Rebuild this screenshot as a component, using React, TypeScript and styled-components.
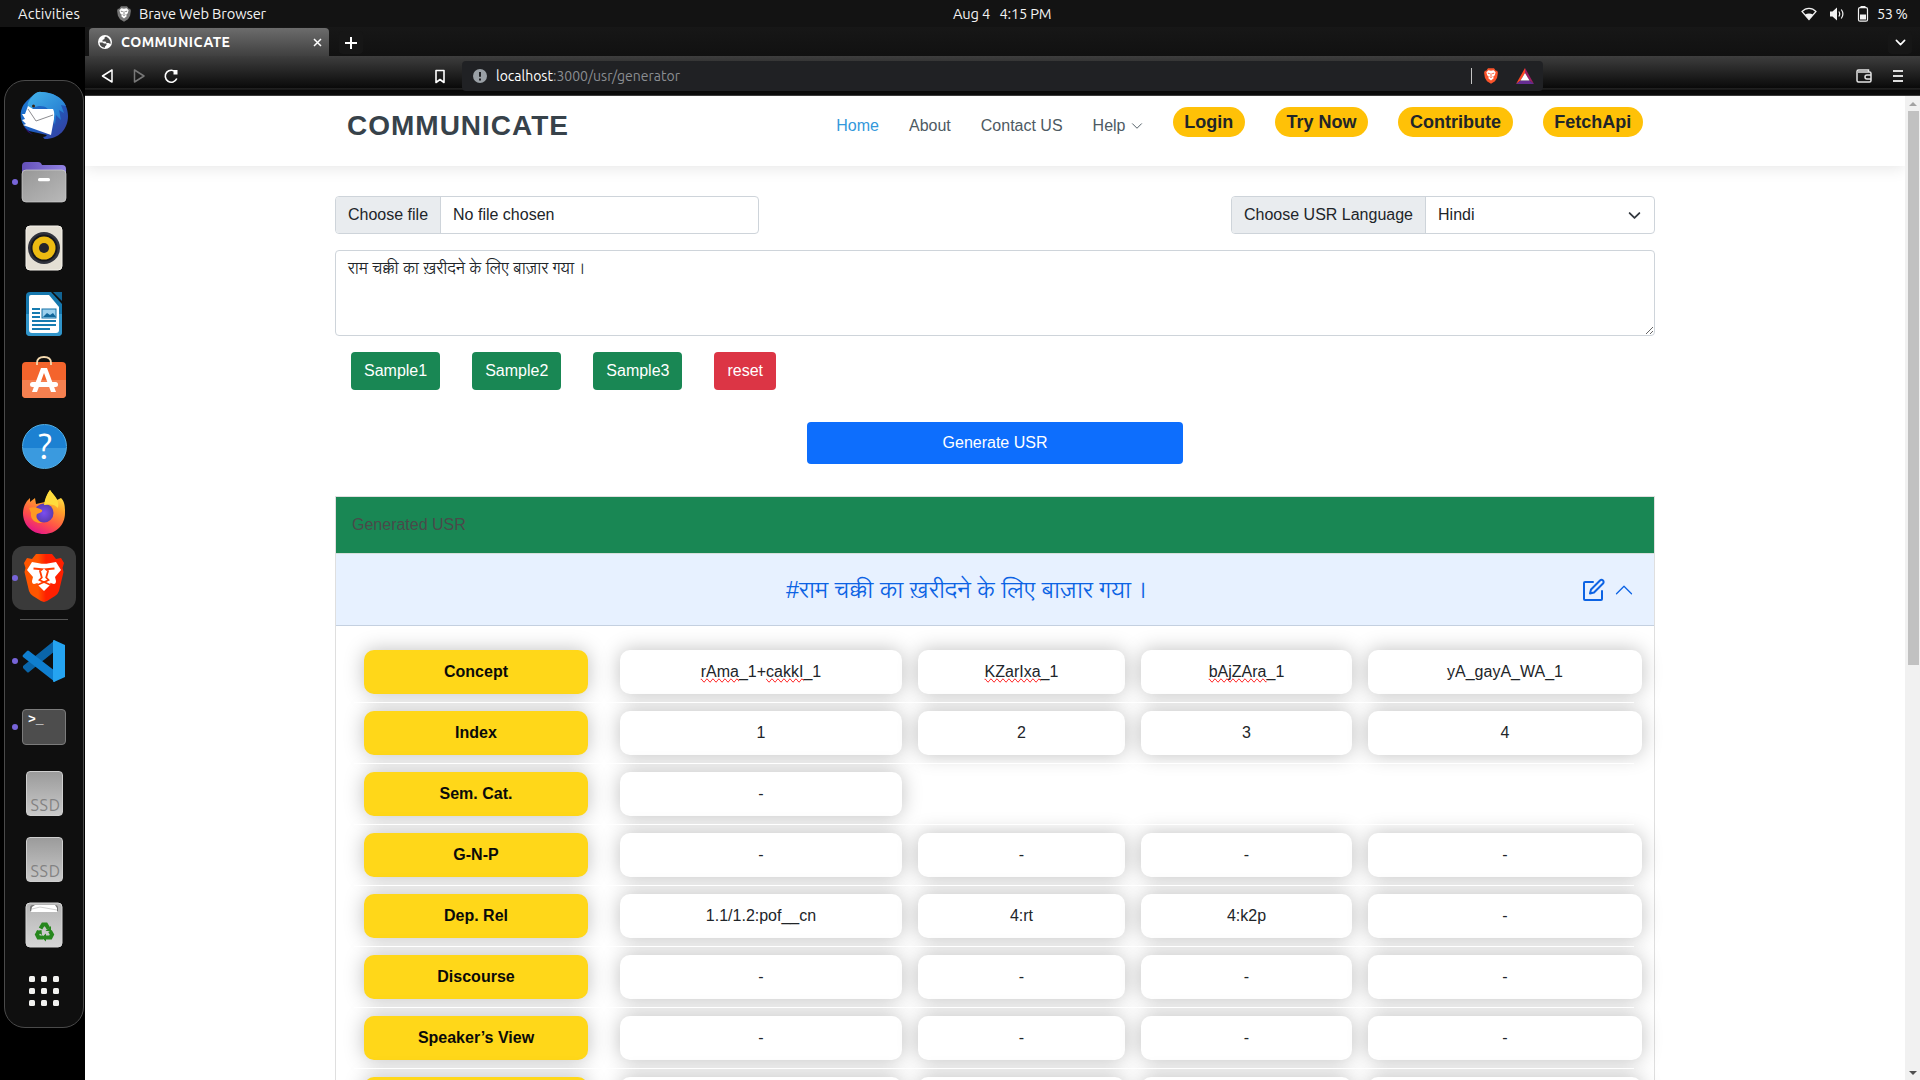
import React from "react";
import styled, { createGlobalStyle } from "styled-components";

const UI = `Ubuntu, "Noto Sans", "Open Sans", sans-serif`;
const BODY = `"Liberation Sans", "Lohit Devanagari", "Noto Sans Devanagari", "Noto Sans", sans-serif`;

const Global = createGlobalStyle`
  *, *::before, *::after { box-sizing: border-box; }
  html, body { margin: 0; padding: 0; background: #000; overflow: hidden; }
  body { font-family: ${BODY}; font-size: 16px; line-height: 24px; color: #212529; }
  button, textarea { font: inherit; }
`;

const Screen = styled.div`
  width: 1920px;
  height: 1080px;
  display: flex;
  flex-direction: column;
  background: #000;
  overflow: hidden;
`;

/* ---------- system bar ---------- */
const SystemBar = styled.header`
  flex: none;
  height: 27px;
  display: grid;
  grid-template-columns: 935px auto 1fr;
  align-items: center;
  padding: 0 13px 0 18px;
  background: #131313;
  color: #f2f2f2;
  font-family: ${UI};
  font-size: 14.67px;
  line-height: 28px;
`;
const BarGroup = styled.div<{ $end?: boolean }>`
  display: flex;
  align-items: center;
  height: 27px;
  justify-content: ${(p) => (p.$end ? "flex-end" : "flex-start")};
`;
const BarText = styled.span<{ $w: number; $ls?: number; $ml?: number }>`
  width: ${(p) => p.$w}px;
  margin-left: ${(p) => p.$ml ?? 0}px;
  letter-spacing: ${(p) => p.$ls ?? 0}px;
  white-space: pre;
`;
const Tray = styled.div`
  display: flex;
  align-items: center;
  gap: 12px;
  margin-right: 8px;
`;

/* ---------- desktop ---------- */
const Desktop = styled.div`
  flex: 1;
  min-height: 0;
  display: flex;
`;
const DockArea = styled.aside`
  flex: none;
  width: 85px;
  padding: 53px 1px 0 4px;
`;
const DockPanel = styled.nav`
  height: 948px;
  border: 1px solid #4a4a4a;
  border-radius: 21px;
  background: #0f0f0f;
  padding: 3px 0 0 0;
  display: flex;
  flex-direction: column;
  align-items: center;
  gap: 2px;
`;
const DockItem = styled.div<{ $active?: boolean; $lift?: number }>`
  position: relative;
  flex: none;
  width: 64px;
  height: 64px;
  display: flex;
  align-items: center;
  justify-content: center;
  padding-bottom: ${(p) => p.$lift ?? 0}px;
  border-radius: 12px;
  background: ${(p) => (p.$active ? "#3a3a3a" : "transparent")};
  svg { display: block; }
`;
const RunningDot = styled.i`
  position: absolute;
  left: 0;
  top: 29px;
  width: 6px;
  height: 6px;
  border-radius: 50%;
  background: #7764d8;
`;
const DockRule = styled.hr`
  flex: none;
  width: 48px;
  height: 1px;
  margin: 7px 0;
  border: 0;
  background: #545454;
`;

/* ---------- browser window ---------- */
const Browser = styled.main`
  flex: 1;
  min-width: 0;
  display: flex;
  flex-direction: column;
`;
const TabStrip = styled.div`
  flex: none;
  height: 29px;
  display: flex;
  align-items: flex-end;
  padding: 0 8px 0 4px;
  background: linear-gradient(#171717, #111);
`;
const Tab = styled.div`
  width: 240px;
  height: 28px;
  padding: 0 7px 0 9px;
  display: flex;
  align-items: center;
  border-radius: 4px 4px 0 0;
  background: linear-gradient(#6c6c6c, #404040);
  color: #fff;
  font: 600 14px/28px ${UI};
`;
const TabTitle = styled.span`
  flex: 1;
  margin-left: 9px;
  letter-spacing: 0.5px;
`;
const StripButton = styled.div<{ $push?: boolean }>`
  width: 24px;
  height: 23px;
  margin: 0 0 2px ${(p) => (p.$push ? "auto" : "10px")};
  border-radius: 4px;
  background: #161616;
  display: flex;
  align-items: center;
  justify-content: center;
`;
const Toolbar = styled.div`
  flex: none;
  height: 40px;
  display: flex;
  align-items: flex-start;
  padding: 5px 0 0;
  border-bottom: 1px solid #3b3b3b;
  background: linear-gradient(#3e3e3e 0, #0b0b0b 31px, #000 31px, #2a2a2a 33px, #080808 34px, #0c0c0c 39px);
`;
const ToolIcons = styled.div<{ $w: number; $pl: number; $gap: number }>`
  width: ${(p) => p.$w}px;
  padding-left: ${(p) => p.$pl}px;
  height: 30px;
  display: flex;
  align-items: center;
  gap: ${(p) => p.$gap}px;
`;
const BookmarkIcon = styled.svg`
  margin-left: 236px;
`;
const AddressBar = styled.div`
  width: 1081px;
  height: 30px;
  padding: 0 9px 0 11px;
  display: flex;
  align-items: center;
  border-radius: 4px;
  background: #202124;
  font: 14px/30px ${UI};
  color: #fff;
`;
const Url = styled.span`
  flex: 1;
  margin-left: 9px;
  i { font-style: normal; color: #8b8e92; }
`;
const AddressRule = styled.i`
  width: 1px;
  height: 16px;
  margin-right: 11px;
  background: #c4c4c4;
`;
const RewardsIcon = styled.svg`
  margin-left: 17px;
`;
const Viewport = styled.div`
  flex: 1;
  min-height: 0;
  display: flex;
  background: #fff;
`;
const Page = styled.div`
  flex: 1;
  min-width: 0;
  overflow: hidden;
`;
const ScrollTrack = styled.div`
  width: 15px;
  display: flex;
  flex-direction: column;
  align-items: center;
  justify-content: space-between;
  padding: 6px 0 5px;
  background: #f1f1f1;
`;
const ScrollThumb = styled.div`
  width: 11px;
  height: 554px;
  margin: 5px 0 auto 1px;
  background: #c1c1c1;
`;

/* ---------- site header ---------- */
const SiteHeader = styled.div`
  height: 70px;
  padding: 0 262px;
  display: flex;
  align-items: flex-start;
  justify-content: space-between;
  background: #fff;
  box-shadow: 0 2px 15px rgba(0, 0, 0, 0.1);
`;
const Brand = styled.h1`
  margin: 12px 0 0;
  font-size: 28px;
  line-height: 36px;
  font-weight: 700;
  letter-spacing: 1px;
  color: #37424a;
`;
const Menu = styled.nav`
  display: flex;
  align-items: flex-start;
  gap: 30px;
`;
const MenuLink = styled.a<{ $active?: boolean }>`
  margin-top: 18px;
  display: flex;
  align-items: center;
  gap: 5px;
  line-height: 24px;
  color: ${(p) => (p.$active ? "#3498db" : "#4e5a63")};
`;
const Pill = styled.a`
  margin-top: 11px;
  height: 30px;
  padding: 0 11.7px;
  border-radius: 15px;
  background: #ffc107;
  color: #212529;
  font-size: 18px;
  line-height: 30px;
  font-weight: 700;
`;

/* ---------- form ---------- */
const Container = styled.div`
  width: 1320px;
  margin: 30px auto 0;
`;
const SplitRow = styled.div`
  display: flex;
  justify-content: space-between;
`;
const InputGroup = styled.div`
  width: 424px;
  height: 38px;
  display: flex;
  border: 1px solid #ced4da;
  border-radius: 4px;
  overflow: hidden;
  line-height: 36px;
`;
const Addon = styled.span`
  padding: 0 12px;
  border-right: 1px solid #ced4da;
  background: #e9ecef;
`;
const Value = styled.span`
  flex: 1;
  display: flex;
  align-items: center;
  justify-content: space-between;
  padding: 0 13px 0 12px;
`;
const Sentence = styled.textarea`
  display: block;
  width: 1320px;
  height: 86px;
  margin-top: 16px;
  padding: 6px 12px;
  border: 1px solid #ced4da;
  border-radius: 4px;
  outline: 0;
  color: #212529;
  background: #fff;
`;
const ButtonRow = styled.div`
  display: flex;
  gap: 32px;
  padding: 16px 16px 0;
`;
const Button = styled.button<{ $tone: "green" | "red" | "blue" }>`
  height: 38px;
  padding: 0 13px;
  border: 0;
  border-radius: 4px;
  color: #fff;
  background: ${(p) => ({ green: "#198754", red: "#dc3545", blue: "#0d6efd" })[p.$tone]};
`;
const Generate = styled(Button)`
  display: block;
  width: 376px;
  height: 42px;
  margin: 32px auto;
`;

/* ---------- result card ---------- */
const Card = styled.section`
  border: 1px solid #dfdfdf;
  border-bottom: 0;
  height: 620px;
`;
const CardTitle = styled.div`
  height: 57px;
  padding: 0 16px;
  border-bottom: 1px solid #d5dfdb;
  background: #198754;
  color: #4a4a4a;
  line-height: 56px;
`;
const AccordionHead = styled.div`
  height: 72px;
  display: flex;
  align-items: center;
  padding: 0 20px 0 14px;
  border-bottom: 1px solid #c4d0e0;
  background: #e7f1ff;
  color: #0c63e4;
`;
const HeadText = styled.h2`
  flex: 1;
  margin: 0;
  text-align: center;
  font-size: 23.5px;
  font-weight: 400;
  line-height: 36px;
`;
const HeadIcons = styled.div`
  display: flex;
  align-items: center;
  gap: 8px;
`;
const Rows = styled.div`
  padding: 16px 12px 0 28px;
`;
const Row = styled.div`
  position: relative;
  height: 61px;
  padding: 8px 0;
  display: grid;
  grid-template-columns: 240px 282px 207px 211px 274px;
  column-gap: 16px;
  &::after {
    content: "";
    position: absolute;
    z-index: 1;
    left: -10px;
    right: 8px;
    bottom: 0;
    height: 1px;
    background: #fff;
  }
`;
const Cell = styled.div`
  height: 44px;
  border-radius: 10px;
  text-align: center;
  line-height: 44px;
  background: #fff;
  box-shadow: 0 0 20px rgba(0, 0, 0, 0.25);
`;
const LabelCell = styled(Cell)`
  margin-right: 16px;
  font-weight: 700;
  color: #0a0a0a;
  background: #ffd719;
`;
const Misspelled = styled.span`
  text-decoration-line: spelling-error;
`;

/* ---------- drawings ---------- */
const Chevron = ({ size = 16, color = "#212529", width = 2, up = false }) => (
  <svg width={size} height={size} viewBox="0 0 16 16" fill="none" stroke={color} strokeWidth={width} strokeLinecap="round" strokeLinejoin="round">
    <path d={up ? "M2 11l6-6 6 6" : "M2 5l6 6 6-6"} />
  </svg>
);

const SHIELD = "M3.2 3.400L5 1h6l1.800 2.400 1.400.2.7 2-.8 4.800L12 14l-4 2.600L4 14 1.900 10.400 1.100 5.600l.7-2z";
const FACE = "M8 3.600l2.600-.5 2 2-.8 3-1.600 1.500.5 1.400L8 13.200 5.300 11l.5-1.400-1.600-1.500-.8-3 2-2z";
const BraveSmall = ({ mono = false }) => (
  <svg width="16" height="18" viewBox="0 0 16 17.5">
    <path d={SHIELD} fill={mono ? "#777" : "#fb542b"} />
    <path d={FACE} fill="#fff" />
    <path d="M4.800 5.900l2 .5M11.200 5.900l-2 .5M8 6v3M6.600 9.400L8 10.200l1.400-.8" stroke={mono ? "#777" : "#fb542b"} strokeWidth=".9" fill="none" />
  </svg>
);

const Thunderbird = () => (
  <svg width="50" height="50" viewBox="0 0 50 50">
    <defs>
      <linearGradient id="tb" x1="0" y1="0" x2="1" y2="1">
        <stop offset="0" stopColor="#1f7fd6" /><stop offset=".5" stopColor="#1c5fc0" /><stop offset="1" stopColor="#3a3a9c" />
      </linearGradient>
      <linearGradient id="tw" x1="0" y1="0" x2="1" y2="1">
        <stop offset="0" stopColor="#44b4ea" /><stop offset="1" stopColor="#1e6fcb" />
      </linearGradient>
    </defs>
    <path d="M10 8C14 4 18 1 21 1c16 0 28 9 28 24 0 13-9 23-23 23-1 0-1-1-2-2 2 0 3-1 4-2L10 40C1 34-3 18 10 8z" fill="url(#tb)" />
    <path d="M10 10C14 3 19 0 22 1c11 0 21 5 25 14l-5-1 3 8-5-3 2 10-5-5-1 10-3-9C30 15 22 13 14 17l-3 5C8 17 8 13 10 10z" fill="url(#tw)" />
    <path d="M9 15l5 3 20 0c2 4 1 7 1 10l-3 16L4 34l3-1-4-4 3-1-3-5 3 0z" fill="#fff" />
    <path d="M9 18l8 12 17-6" fill="none" stroke="#8c8c90" />
    <path d="M4 35l10 9-5-3z" fill="#33107a" />
    <circle cx="14.500" cy="15" r="1.500" fill="#3b2412" />
  </svg>
);

const Files = () => (
  <svg width="46" height="42" viewBox="0 0 46 42">
    <defs>
      <linearGradient id="fg" x1="0" y1="0" x2="1" y2="1"><stop offset="0" stopColor="#979797" /><stop offset="1" stopColor="#b9b9b9" /></linearGradient>
      <linearGradient id="fp" x1="0" x2="1"><stop offset="0" stopColor="#6450b8" /><stop offset="1" stopColor="#9384e4" /></linearGradient>
    </defs>
    <path d="M1 5q0-4 4-4h12q3 0 4 3h20q4 0 4 4v12H1z" fill="url(#fp)" />
    <rect x="1" y="9" width="44" height="32" rx="4" fill="url(#fg)" stroke="#d0d0d0" strokeWidth=".7" />
    <rect x="17" y="17" width="12" height="3.200" rx="1.500" fill="#fff" />
  </svg>
);

const Rhythmbox = () => (
  <svg width="38" height="46" viewBox="0 0 38 46">
    <rect x="1" y="1" width="36" height="44" rx="4" fill="#e4dfd4" stroke="#f5f2eb" />
    <circle cx="19" cy="23" r="16" fill="#30323c" />
    <circle cx="19" cy="23" r="13.500" fill="#17181d" />
    <circle cx="19" cy="23" r="11.500" fill="#edbb12" />
    <circle cx="19" cy="23" r="5" fill="#24252b" />
  </svg>
);

const Writer = () => (
  <svg width="38" height="46" viewBox="0 0 38 46">
    <path d="M5 1h21l11 12v28q0 4-4 4H5q-4 0-4-4V5q0-4 4-4z" fill="#1678ae" />
    <path d="M1 23h36v18q0 4-4 4H5q-4 0-4-4z" fill="#3195ca" />
    <path d="M28 1h9v9z" fill="#126392" />
    <path d="M6 4h18l10 12v23q0 3-3 3H7q-3 0-3-3V6q0-2 2-2z" fill="#fff" />
    <path d="M7 18h8M7 22h8M7 26h8M7 30h24M7 34h24M7 38h18" stroke="#167bb0" strokeWidth="1.800" />
    <rect x="17" y="18" width="14" height="9" fill="#9dd1ee" stroke="#1673a7" />
    <path d="M18 26l4-4 3 2 3-2 3 4z" fill="#12679a" />
  </svg>
);

const Software = () => (
  <svg width="46" height="44" viewBox="0 0 46 44">
    <rect x="1" y="7" width="44" height="36" rx="4" fill="#f4642c" />
    <path d="M1 25h44v14q0 4-4 4H5q-4 0-4-4z" fill="#f58050" />
    <path d="M16 10v-2q0-6 7-6t7 6v2" fill="none" stroke="#f4d9ae" strokeWidth="1.800" />
    <path d="M20 13h6l9 24h-5l-7-19-7 19h-5z" fill="#fff" />
    <rect x="9" y="27" width="28" height="5" rx="2.500" fill="#fff" />
  </svg>
);

const HelpDisc = styled.div`
  width: 45px;
  height: 45px;
  display: flex;
  align-items: center;
  justify-content: center;
  border-radius: 50%;
  border: 1px solid #54b1e8;
  background: linear-gradient(#1c81d2 54%, #3a9adf 54%);
  color: #fff;
  font: 36px/36px ${UI};
  padding: 0 0 1px 2px;
`;

const Firefox = () => (
  <svg width="44" height="46" viewBox="0 0 44 46">
    <defs>
      <linearGradient id="ff" x1=".8" y1="0" x2=".3" y2="1">
        <stop offset="0" stopColor="#fff44f" /><stop offset=".35" stopColor="#ffa02a" /><stop offset=".7" stopColor="#ff4f4a" /><stop offset="1" stopColor="#e3148c" />
      </linearGradient>
      <radialGradient id="fo"><stop offset="0" stopColor="#7a4df0" /><stop offset="1" stopColor="#5b3bb0" /></radialGradient>
    </defs>
    <path d="M28 1c3 4 5 8 7 10l4-2c4 4 4 9 4 15 0 12-9 21-21 21S1 36 1 24c0-5 2-9 4-12l3-3v4l5-4 1 6 9-2c1-5 3-9 5-12z" fill="url(#ff)" />
    <circle cx="22" cy="24" r="9.500" fill="url(#fo)" />
    <path d="M7 19c5-2 10 0 13 2 1 2-2 3-5 4-2 4 2 8 6 9-9 1-13-5-12-10z" fill="#ff9a22" />
    <path d="M28 1c4 6 10 9 8 18-3-4-8-4-14-3 1-7 3-11 6-15z" fill="#ffdc3c" />
  </svg>
);

const BraveBig = () => (
  <svg width="40" height="48" viewBox="0 0 40 48">
    <defs><linearGradient id="bv"><stop offset=".35" stopColor="#ff5500" /><stop offset=".55" stopColor="#ff2000" /></linearGradient></defs>
    <path d="M12 0h16l4 5 5-1 3 5-1.500 5 1 4-4.500 19q-1 3-4 5l-8 5-3 1-3-1-8-5q-3-2-4-5L.5 18l1-4L0 9l3-5 5 1z" fill="url(#bv)" />
    <path d="M8 8l7 1.200q5 1.300 10 0L32 8l5 8-6 7 1 4q0 4-4 2.500l-1.500-.7-.5 2.200-6 6-6-6-.5-2.200-1.500.7q-4 1.500-4-2.500l1-4-6-7z" fill="#fff" />
    <path d="M9.500 14.500l8.500.8-2 1.700 1.800 6.500-2.300 2.500 4.500 2.300 4.500-2.300-2.300-2.500 1.800-6.500-2-1.700 8.500-.8" fill="none" stroke="#ff3a00" strokeWidth="1.800" />
    <path d="M13.500 31l6.500-3 6.500 3" fill="none" stroke="#ff3a00" strokeWidth="1.600" />
  </svg>
);

const VSCode = () => (
  <svg width="44" height="44" viewBox="0 0 44 44">
    <path d="M1 29l4 4q1 1 2 0L33 12V1L1 27z" fill="#0a65a9" />
    <path d="M1 16l4-4q1-1 2 0l26 20v11L1 18q-1-1 0-2z" fill="#0f7fd0" />
    <path d="M32 1l11 5v32l-11 5q-1 0-1-1V2q0-1 1-1z" fill="#25a4f1" />
  </svg>
);

const TerminalBox = styled.div`
  width: 44px;
  height: 36px;
  padding: 3px 5px;
  border: 1px solid #7b7b7b;
  border-radius: 4px;
  background: #4d4d4d;
  color: #fff;
  font: 700 13px/13px "Liberation Mono", monospace;
`;
const Drive = styled.div`
  width: 37px;
  height: 45px;
  padding: 25px 0 0 4px;
  border: 1px solid #cfcfcf;
  border-radius: 4px;
  background: linear-gradient(#9b9b9b, #c9c9c9);
  color: #828282;
  font: 16px/17px ${UI};
  letter-spacing: 0.7px;
  overflow: hidden;
`;
const Trash = () => (
  <svg width="38" height="46" viewBox="0 0 38 46">
    <defs><linearGradient id="tr" x1="0" y1="0" x2="0" y2="1"><stop offset="0" stopColor="#b5b5b5" /><stop offset="1" stopColor="#d5d5d5" /></linearGradient></defs>
    <rect x="1" y="1" width="36" height="44" rx="4" fill="url(#tr)" stroke="#d8d8d8" />
    <path d="M5 9V6q0-3 3-3h22q3 0 3 3v3z" fill="#777" />
    <path d="M6 10l1-5 3-2h20l2 3v4z" fill="#fff" />
    <path d="M7 7l8-2 17 3" fill="none" stroke="#bbb" strokeWidth=".7" />
    <g transform="translate(10 20)" fill="none" stroke="#26871d" strokeWidth="4">
      <path d="M5.500 6.500L8 2.500h3l2.500 4" />
      <path d="M15 9l2 3.500-1.500 3H11" />
      <path d="M8 15.500H3.500L2 12.500 4 9" />
    </g>
    <path d="M26 24v5h-5.500zM21 31.500v8l-4.500-4zM11 29l5.500-1 .5 5z" fill="#26871d" />
  </svg>
);
const AppGrid = styled.div`
  display: grid;
  grid-template-columns: repeat(3, 6px);
  gap: 6px;
  i { height: 6px; border-radius: 1.5px; background: #f2f2f0; }
`;

const rows: [string, string[]][] = [
  ["Concept", ["rAma_1+cakkI_1", "KZarIxa_1", "bAjZAra_1", "yA_gayA_WA_1"]],
  ["Index", ["1", "2", "3", "4"]],
  ["Sem. Cat.", ["-"]],
  ["G-N-P", ["-", "-", "-", "-"]],
  ["Dep. Rel", ["1.1/1.2:pof__cn", "4:rt", "4:k2p", "-"]],
  ["Discourse", ["-", "-", "-", "-"]],
  ["Speaker’s View", ["-", "-", "-", "-"]],
  ["", ["", "", "", ""]],
];

const flagged = /(rAma|cakkI|KZarIxa|bAjZAra)/;
const Checked = ({ text }: { text: string }) => (
  <>{text.split(flagged).map((part, i) => (flagged.test(part) ? <Misspelled key={i}>{part}</Misspelled> : part))}</>
);

export default function App() {
  return (
    <Screen>
      <Global />
      <SystemBar>
        <BarGroup>
          <BarText $w={98} $ls={0.2}>Activities</BarText>
          <BraveSmall mono />
          <BarText $w={140} $ml={7} $ls={-0.12}>Brave Web Browser</BarText>
        </BarGroup>
        <BarText $w={100} $ls={-0.2}>{"Aug 4   4:15 PM"}</BarText>
        <BarGroup $end>
          <Tray>
            <svg width="16" height="14" viewBox="0 0 16 14">
              <path d="M1 4.500C5 .3 11 .3 15 4.500L8 12.500z" fill="none" stroke="#f2f2f2" strokeWidth="1.200" />
              <path d="M4 7.500q4-2 8 0l-4 5z" fill="#f2f2f2" />
            </svg>
            <svg width="16" height="14" viewBox="0 0 16 14">
              <path d="M1 4.500h2.500L8 .5v13L3.500 9.500H1z" fill="#f2f2f2" />
              <path d="M9.800 4.500q1.800 2.500 0 5M12.300 2.500q3.200 4.500 0 9" fill="none" stroke="#f2f2f2" strokeWidth="1.200" />
            </svg>
            <svg width="12" height="16" viewBox="0 0 12 16">
              <path d="M3.500 0h5v2h-5z" fill="#f2f2f2" />
              <rect x="1.500" y="1.700" width="9" height="13.500" rx="1.500" fill="none" stroke="#f2f2f2" strokeWidth="1.200" />
              <path d="M3 8.500h6v5H3z" fill="#f2f2f2" />
            </svg>
          </Tray>
          <BarText $w={30} $ls={-0.5}>53 %</BarText>
        </BarGroup>
      </SystemBar>

      <Desktop>
        <DockArea>
          <DockPanel>
            <DockItem $lift={1}><Thunderbird /></DockItem>
            <DockItem><RunningDot /><Files /></DockItem>
            <DockItem><Rhythmbox /></DockItem>
            <DockItem><Writer /></DockItem>
            <DockItem $lift={6}><Software /></DockItem>
            <DockItem><HelpDisc>?</HelpDisc></DockItem>
            <DockItem><Firefox /></DockItem>
            <DockItem $active><RunningDot /><BraveBig /></DockItem>
            <DockRule />
            <DockItem><RunningDot /><VSCode /></DockItem>
            <DockItem><RunningDot /><TerminalBox>&gt;_</TerminalBox></DockItem>
            <DockItem><Drive>SSD</Drive></DockItem>
            <DockItem><Drive>SSD</Drive></DockItem>
            <DockItem><Trash /></DockItem>
            <DockItem><AppGrid>{Array.from({ length: 9 }, (_, i) => <i key={i} />)}</AppGrid></DockItem>
          </DockPanel>
        </DockArea>

        <Browser>
          <TabStrip>
            <Tab>
              <svg width="14" height="14" viewBox="0 0 14 14">
                <circle cx="7" cy="7" r="7" fill="#fff" />
                <path d="M1.500 7.500h3l1.500 1h2.500v1.500l-1.500 1.500v1.300q-5-.5-5.500-5.300zM8 1.500l-1.500 1v1.500l-2 1v1.500h3l1 1.500h2l2 1q.6-5-4.500-7.500z" fill="#4c4c4c" />
              </svg>
              <TabTitle>COMMUNICATE</TabTitle>
              <svg width="9" height="9" viewBox="0 0 9 9"><path d="M1 1l7 7M8 1L1 8" stroke="#fff" strokeWidth="1.500" /></svg>
            </Tab>
            <StripButton>
              <svg width="12" height="12" viewBox="0 0 12 12"><path d="M6 0v12M0 6h12" stroke="#fff" strokeWidth="2" /></svg>
            </StripButton>
            <StripButton $push><Chevron size={11} color="#fff" width={2.4} /></StripButton>
          </TabStrip>

          <Toolbar>
            <ToolIcons $w={377} $pl={16} $gap={18.5}>
              <svg width="13" height="14" viewBox="0 0 13 14"><path d="M11 1v12L1.500 7z" fill="none" stroke="#fff" strokeWidth="1.500" strokeLinejoin="round" /></svg>
              <svg width="13" height="14" viewBox="0 0 13 14"><path d="M1.500 1v12L11 7z" fill="none" stroke="#777" strokeWidth="1.500" strokeLinejoin="round" /></svg>
              <svg width="15" height="15" viewBox="0 0 15 15"><path d="M12.800 9.500A6 6 0 1 1 12 3.500" fill="none" stroke="#fff" strokeWidth="1.600" /><path d="M9.500 1h4v4.500h-4z" fill="#fff" /></svg>
              <BookmarkIcon width="12" height="15" viewBox="0 0 12 15"><path d="M2 1.500h8v12l-4-3-4 3z" fill="none" stroke="#fff" strokeWidth="1.600" strokeLinejoin="round" /></BookmarkIcon>
            </ToolIcons>
            <AddressBar>
              <svg width="14" height="14" viewBox="0 0 14 14"><circle cx="7" cy="7" r="7" fill="#9aa0a6" /><path d="M7 3v4.800M7 9.500v2" stroke="#202124" strokeWidth="2" /></svg>
              <Url>localhost<i>:3000/usr/generator</i></Url>
              <AddressRule />
              <BraveSmall />
              <RewardsIcon width="18" height="16" viewBox="0 0 18 16">
                <path d="M9 0v5L4.500 12.500 0 16z" fill="#ff4724" />
                <path d="M9 0l9 16-4.500-3.500L9 5z" fill="#9e1f63" />
                <path d="M0 16h18l-4.500-3.500h-9z" fill="#662d91" />
                <path d="M9 5l4.500 7.500h-9z" fill="#fff" />
              </RewardsIcon>
            </AddressBar>
            <ToolIcons $w={377} $pl={313} $gap={21}>
              <svg width="16" height="14" viewBox="0 0 16 14" fill="none" stroke="#e4e4e4" strokeWidth="1.500">
                <path d="M12.500 3V1H2.500Q1 1 1 2.500v9Q1 13 2.500 13h11q1.500 0 1.500-1.500v-7Q15 3 13.500 3H2" /><path d="M15 6h-4q-2 0-2 2t2 2h4" />
              </svg>
              <svg width="10" height="14" viewBox="0 0 10 14"><path d="M0 2h10M0 7h10M0 12h10" stroke="#ddd" strokeWidth="2" /></svg>
            </ToolIcons>
          </Toolbar>

          <Viewport>
            <Page>
              <SiteHeader>
                <Brand>COMMUNICATE</Brand>
                <Menu>
                  <MenuLink $active>Home</MenuLink>
                  <MenuLink>About</MenuLink>
                  <MenuLink>Contact US</MenuLink>
                  <MenuLink>Help <Chevron size={12} color="#4e5a63" width={1.3} /></MenuLink>
                  <Pill>Login</Pill>
                  <Pill>Try Now</Pill>
                  <Pill>Contribute</Pill>
                  <Pill>FetchApi</Pill>
                </Menu>
              </SiteHeader>

              <Container>
                <SplitRow>
                  <InputGroup><Addon>Choose file</Addon><Value>No file chosen</Value></InputGroup>
                  <InputGroup>
                    <Addon>Choose USR Language</Addon>
                    <Value>Hindi <Chevron size={13} color="#343a40" width={2.2} /></Value>
                  </InputGroup>
                </SplitRow>
                <Sentence defaultValue="राम चक्की का ख़रीदने के लिए बाज़ार गया ।" spellCheck={false} />
                <ButtonRow>
                  <Button $tone="green">Sample1</Button>
                  <Button $tone="green">Sample2</Button>
                  <Button $tone="green">Sample3</Button>
                  <Button $tone="red">reset</Button>
                </ButtonRow>
                <Generate $tone="blue">Generate USR</Generate>

                <Card>
                  <CardTitle>Generated USR</CardTitle>
                  <AccordionHead>
                    <HeadText>#राम चक्की का ख़रीदने के लिए बाज़ार गया ।</HeadText>
                    <HeadIcons>
                      <svg width="24" height="24" viewBox="0 0 24 24" fill="none" stroke="#0c63e4" strokeWidth="2" strokeLinecap="round" strokeLinejoin="round">
                        <path d="M11 4H3a1 1 0 0 0-1 1v16a1 1 0 0 0 1 1h16a1 1 0 0 0 1-1v-8" />
                        <path d="M18 2.500a2.120 2.120 0 0 1 3 3L12 14.500l-4 1 1-4z" />
                      </svg>
                      <Chevron size={20} color="#0c63e4" width={1} up />
                    </HeadIcons>
                  </AccordionHead>
                  <Rows>
                    {rows.map(([label, values], i) => (
                      <Row key={i}>
                        <LabelCell>{label}</LabelCell>
                        {values.map((v, j) => <Cell key={j}><Checked text={v} /></Cell>)}
                      </Row>
                    ))}
                  </Rows>
                </Card>
              </Container>
            </Page>
            <ScrollTrack>
              <svg width="8" height="4" viewBox="0 0 8 4"><path d="M0 4l4-4 4 4z" fill="#a3a3a3" /></svg>
              <ScrollThumb />
              <svg width="8" height="4" viewBox="0 0 8 4"><path d="M0 0l4 4 4-4z" fill="#505050" /></svg>
            </ScrollTrack>
          </Viewport>
        </Browser>
      </Desktop>
    </Screen>
  );
}
